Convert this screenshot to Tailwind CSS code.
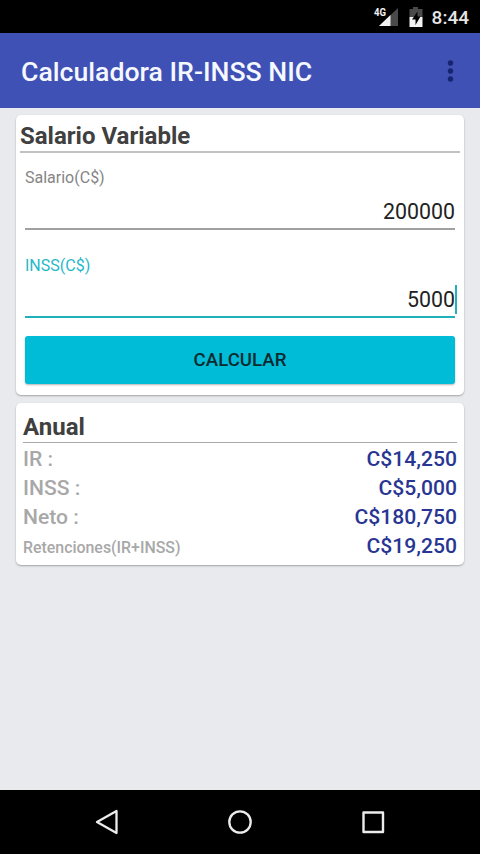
<!DOCTYPE html>
<html lang="es">
<head>
<meta charset="utf-8">
<title>Calculadora IR-INSS NIC</title>
<script src="https://cdn.jsdelivr.net/npm/@tailwindcss/browser@4"></script>
</head>
<body class="w-[480px] h-[854px] overflow-hidden flex flex-col bg-[#e8eaee] font-[Roboto,sans-serif]">
  <div class="h-[33px] shrink-0 bg-black flex items-center justify-end pr-[11px] text-[#e6e6e6]">
    <svg class="w-[26px] h-[22px] mr-[10px]" viewBox="0 0 26 22">
      <path d="M25 2V20H6z" fill="#4a4a4a"/>
      <path d="M17.500 9V20H6z" fill="#f2f2f2"/>
      <text x="1" y="9.500" font-size="10.500" font-weight="700" textLength="12" lengthAdjust="spacingAndGlyphs" fill="#f2f2f2">4G</text>
    </svg>
    <svg class="w-[14px] h-[20px] mr-[9px]" viewBox="0 0 14 20">
      <path d="M4 0H9V2H13.500V10H0.500V2H4z" fill="#4a4a4a"/>
      <path d="M0.500 10H13.500V20H0.500z" fill="#f2f2f2"/>
      <path d="M8.500 4.500L3 12.500H6.500V18L11.500 9.500H8.500z" fill="#000"/>
    </svg>
    <span class="text-[19px] leading-[22px] font-medium mt-[2px]">8:44</span>
  </div>
  <header class="h-[75px] shrink-0 bg-[#3f51b5] flex items-center justify-between pl-[21px] pr-[26px]">
    <h1 class="text-[26.670px] leading-[32px] font-medium text-[#f5f8ff] mt-[2px] whitespace-nowrap">Calculadora IR-INSS NIC</h1>
    <svg class="w-[7px] h-[22px]" viewBox="0 0 7 22" fill="#17246f">
      <circle cx="3.500" cy="3" r="2.700"/><circle cx="3.500" cy="11" r="2.700"/><circle cx="3.500" cy="19" r="2.700"/>
    </svg>
  </header>
  <main class="flex-1 flex flex-col gap-2 px-4 pt-[7px]">
    <section class="h-[280px] rounded-[5px] bg-white shadow-[0_1px_2px_rgba(0,0,0,0.3)] px-1 flex flex-col">
      <h2 class="h-[38px] pt-[7px] text-[24px] leading-[28px] font-bold text-[#404040] border-b-2 border-[#c2c2c2]">Salario Variable</h2>
      <div class="px-[5px] flex flex-col">
        <label class="mt-[15px] text-[16px] leading-[20px] text-[#858585]">Salario(C$)</label>
        <div class="mt-[11px] h-[31px] border-b-2 border-[#a0a0a0] text-right text-[21.330px] leading-[26px] text-[#222]">200000</div>
        <label class="mt-[26px] text-[16px] leading-[20px] text-[#1fb8c8]">INSS(C$)</label>
        <div class="relative mt-[11px] h-[31px] border-b-2 border-[#1fb0be] text-right text-[21.330px] leading-[26px] text-[#222]">5000<span class="absolute -right-[2px] -top-[2px] w-[2px] h-[29px] bg-[#22b0bc]"></span></div>
        <button class="mt-[18px] h-[48px] rounded-[3px] bg-[#00bcd7] shadow-[0_1px_2px_rgba(0,0,0,0.3)] text-[18.670px] leading-[24px] font-medium text-[#0b2a30]">CALCULAR</button>
      </div>
    </section>
    <section class="h-[162px] rounded-[5px] bg-white shadow-[0_1px_2px_rgba(0,0,0,0.3)] px-[7px] flex flex-col">
      <h2 class="h-[40px] pt-[10px] text-[24px] leading-[28px] font-bold text-[#404040] border-b border-[#a8a8a8]">Anual</h2>
      <dl class="mt-[1px] text-[21.100px] leading-[29px] font-medium text-[#a8a8a8]">
        <div class="flex justify-between"><dt>IR :</dt><dd class="text-[#283593]">C$14,250</dd></div>
        <div class="flex justify-between"><dt>INSS :</dt><dd class="text-[#283593]">C$5,000</dd></div>
        <div class="flex justify-between"><dt>Neto :</dt><dd class="text-[#283593]">C$180,750</dd></div>
        <div class="flex justify-between"><dt class="text-[15.900px] pt-[2px]">Retenciones(IR+INSS)</dt><dd class="text-[#283593]">C$19,250</dd></div>
      </dl>
    </section>
  </main>
  <nav class="h-[64px] shrink-0 bg-black flex items-center justify-center gap-[107px]">
    <svg class="w-[26px] h-[26px]" viewBox="0 0 26 26" fill="none" stroke="#ececec" stroke-width="2.300" stroke-linejoin="round"><path d="M22.500 2V24L3 13z"/></svg>
    <svg class="w-[26px] h-[26px]" viewBox="0 0 26 26" fill="none" stroke="#ececec" stroke-width="2.300"><circle cx="13" cy="13" r="10.700"/></svg>
    <svg class="w-[26px] h-[26px]" viewBox="0 0 26 26" fill="none" stroke="#ececec" stroke-width="2.400" stroke-linejoin="round"><path d="M3.500 3.500H23V23H3.500z"/></svg>
  </nav>
</body>
</html>
